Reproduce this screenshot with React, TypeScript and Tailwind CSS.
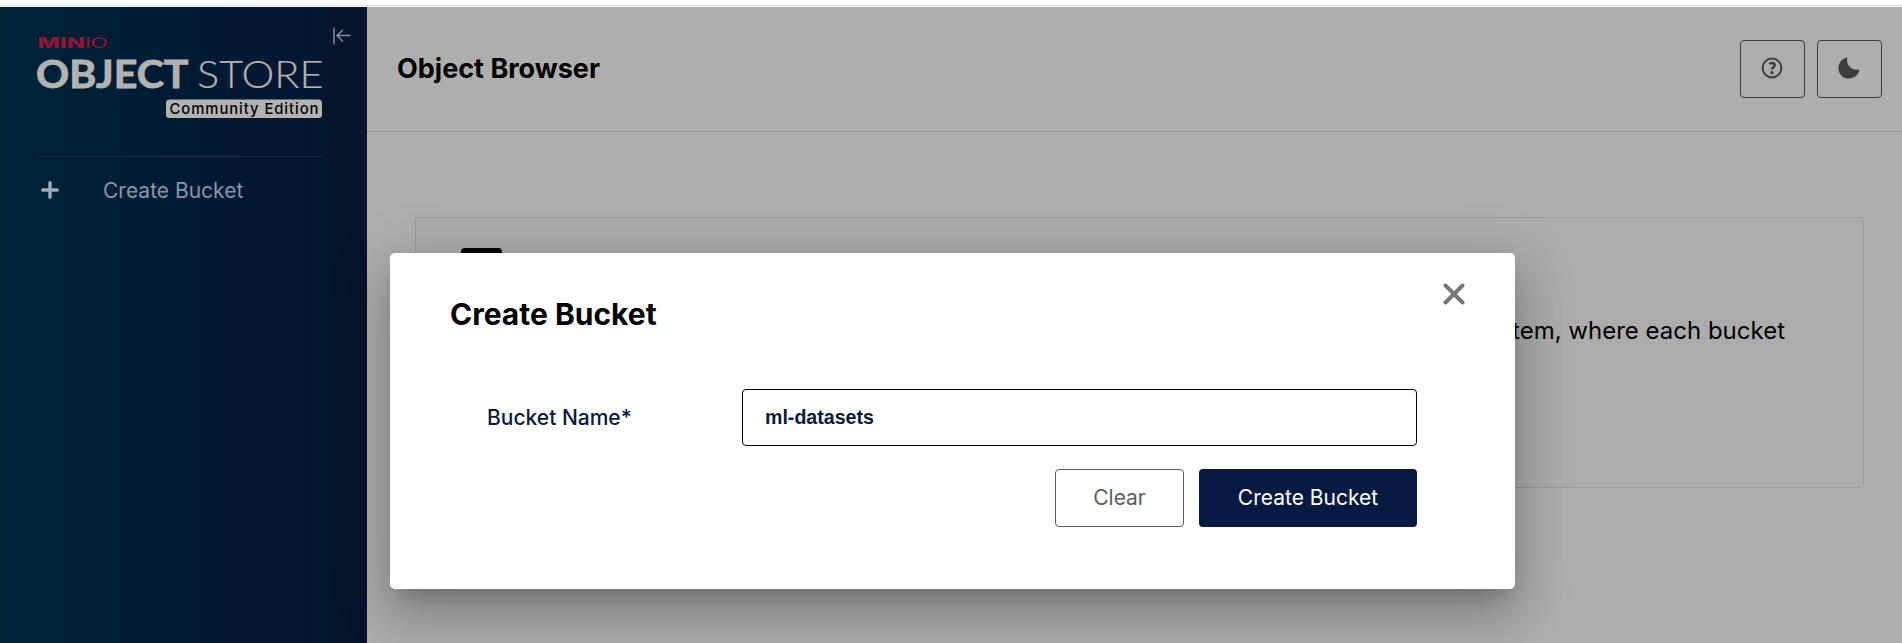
import { useState } from 'react';
import type { ReactNode } from 'react';

function Logo() {
  return (
    <svg width="290" height="92" viewBox="0 0 290 92" aria-label="MinIO Object Store Community Edition">
      <g fill="#8f1636">
        <text x="0.5" y="18" fontFamily="Inter, sans-serif" fontWeight="800" fontSize="15" textLength="47.5" lengthAdjust="spacingAndGlyphs">MIN</text>
        <text x="48" y="18" fontFamily="Lato, sans-serif" fontWeight="400" fontSize="15.5" textLength="22.5" lengthAdjust="spacingAndGlyphs">IO</text>
      </g>
      <g fill="#b2b2b2" stroke="#b2b2b2" fontFamily="Lato, sans-serif" fontSize="38">
        <text x="-1" y="57.8" strokeWidth="0.9" fontWeight="700" textLength="152.5" lengthAdjust="spacingAndGlyphs">OBJECT</text>
        <text x="160" y="57.8" strokeWidth="0.2" fontWeight="300" textLength="126.5" lengthAdjust="spacingAndGlyphs">STORE</text>
      </g>
      <rect x="129" y="69.5" width="156" height="18.5" rx="3.5" fill="#b2b2b2" />
      <text x="132.5" y="83.5" fill="#000" fontFamily="Inter, sans-serif" fontWeight="500" fontSize="14.8" textLength="149">Community Edition</text>
    </svg>
  );
}

function CollapseIcon() {
  return (
    <svg width="18" height="18" viewBox="0 0 18 18" fill="none" stroke="#8595a8" strokeWidth="1.4">
      <path d="M1 0.5v17M17.5 8.5H4M10 3L4 8.5l6 6" />
    </svg>
  );
}

function HelpIcon() {
  return (
    <svg width="22" height="22" viewBox="0 0 22 22" fill="none" stroke="#3c3c3c">
      <circle cx="11" cy="11" r="9.4" strokeWidth="2" />
      <path d="M8.4 7.1c.6-.9 1.5-1.1 2.6-1.1 1.6 0 2.8.8 2.8 2.2 0 2.1-3 2-3 4.4" strokeWidth="2.3" />
      <circle cx="10.9" cy="15.7" r="1.6" fill="#3c3c3c" stroke="none" />
    </svg>
  );
}

function MoonIcon() {
  return (
    <svg width="22" height="22" viewBox="0 0 22 22" fill="#3c3c3c">
      <path d="M9.3.6C7.9 7.2 12.4 14 21.6 12.6 20.6 18 16.2 21.6 11 21.6 5 21.6.4 17 .4 11.2.4 6 4.2 1.4 9.3.6z" />
    </svg>
  );
}

function PlusIcon() {
  return (
    <svg width="18" height="18" viewBox="0 0 18 18" stroke="#9cabba" strokeWidth="3.4" strokeLinecap="round">
      <path d="M9 1.7v14.6M1.7 9h14.6" />
    </svg>
  );
}

function CloseIcon() {
  return (
    <svg width="22" height="22" viewBox="0 0 22 22" stroke="#777" strokeWidth="4" strokeLinecap="round">
      <path d="M2.5 2.5l17 17M19.5 2.5l-17 17" />
    </svg>
  );
}

function HeaderButton({ label, children }: { label: string; children: ReactNode }) {
  return (
    <button aria-label={label} className="flex h-[58px] w-[65px] items-center justify-center rounded-[4px] border border-[#3c3c3c] pb-0.5 pr-px">
      {children}
    </button>
  );
}

function Sidebar() {
  return (
    <aside className="relative w-[367px] shrink-0 bg-linear-to-r from-[#002235] via-[#001b34] via-50% to-[#06142d] pl-[37px] pr-[46px]">
      <div className="pt-[23px]">
        <Logo />
      </div>
      <button aria-label="Collapse menu" className="absolute left-[333px] top-5">
        <CollapseIcon />
      </button>
      <div className="mt-[34px] h-px w-[284px] bg-[#12304a]" />
      <button className="mt-[21px] flex h-6 items-center pl-1 text-[21px] text-[#8597ab]">
        <PlusIcon />
        <span className="ml-[44px] pt-0.5 leading-6">Create Bucket</span>
      </button>
    </aside>
  );
}

function CreateBucketModal() {
  const [name, setName] = useState('ml-datasets');

  return (
    <div
      role="dialog"
      className="absolute left-[390px] top-[253px] h-[336px] w-[1125px] rounded-[5px] bg-white pl-[60px] pr-[98px] shadow-[0_14px_19px_-9px_rgba(0,0,0,0.2),0_30px_48px_4px_rgba(0,0,0,0.14),0_11px_58px_10px_rgba(0,0,0,0.12)]"
    >
      <button aria-label="Close" className="absolute right-[50px] top-[30px]">
        <CloseIcon />
      </button>
      <h2 className="pt-[42px] text-[30px] font-bold leading-[38px] text-black">Create Bucket</h2>
      <div className="mt-14 flex items-center justify-between">
        <label htmlFor="bucket-name" className="pl-[37px] pt-px text-[21px] font-[550] text-[#07193e]">
          Bucket Name*
        </label>
        <input
          id="bucket-name"
          value={name}
          onChange={(e) => setName(e.target.value)}
          className="h-[57px] w-[675px] rounded-[4px] border border-[#000110] px-[22px] font-['Liberation_Sans',sans-serif] text-[19.6px] font-bold text-[#07193e] outline-none"
        />
      </div>
      <div className="mt-[23px] flex justify-end gap-[15px] text-[21px]">
        <button onClick={() => setName('')} className="h-[58px] w-[129px] rounded-[4px] border border-[#5e5e5e] text-[#5e5e5e]">
          Clear
        </button>
        <button className="h-[58px] w-[218px] rounded-[4px] bg-[#051a3e] text-white">Create Bucket</button>
      </div>
    </div>
  );
}

export default function App() {
  return (
    <div className="relative flex h-[643px] w-full flex-col overflow-hidden bg-white font-[Inter,sans-serif]">
      <div className="h-[7px] shrink-0 pt-[5px]">
        <div className="h-px bg-[#dcdce0]" />
      </div>
      <div className="flex min-h-0 flex-1">
        <Sidebar />
        <main className="min-w-0 flex-1 bg-[#aeaeae]">
          <header className="flex h-[125px] items-center justify-between border-b border-[#999] pl-[30px] pr-5">
            <h1 className="text-[27px] font-bold text-black">Object Browser</h1>
            <div className="flex gap-3">
              <HeaderButton label="Help">
                <HelpIcon />
              </HeaderButton>
              <HeaderButton label="Dark mode">
                <MoonIcon />
              </HeaderButton>
            </div>
          </header>
          <section className="ml-12 mr-[38px] mt-[85px] h-[271px] rounded-[3px] border border-[#9a9a9a] bg-[#acacac] pl-[45px] pr-[78px] pt-[30px]">
            <div className="h-8 w-[41px] rounded-[4px] bg-black" />
            <p className="mt-[35px] text-right text-[24px] leading-8 text-black">tem, where each bucket</p>
          </section>
        </main>
      </div>
      <CreateBucketModal />
    </div>
  );
}
